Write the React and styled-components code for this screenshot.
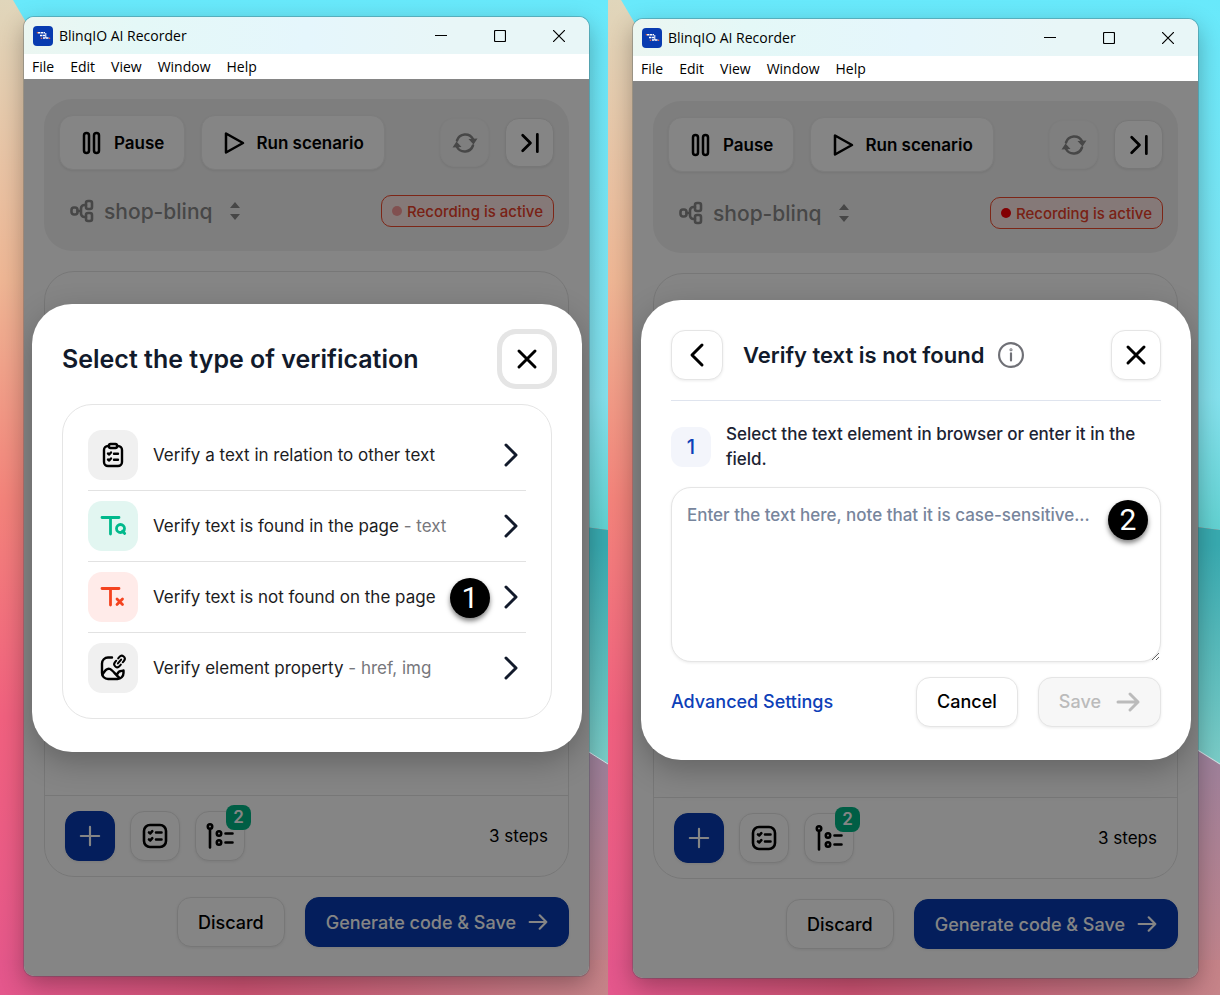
import React, { useState } from 'react';
import styled, { createGlobalStyle, css } from 'styled-components';

const verifications = [
    { id: 'relation', icon: 'clipboard', tone: 'plain', label: 'Verify a text in relation to other text' },
    { id: 'found', icon: 'textFound', tone: 'green', label: 'Verify text is found in the page', hint: 'text' },
    { id: 'notFound', icon: 'textMissing', tone: 'red', label: 'Verify text is not found on the page', marker: 1 },
    { id: 'property', icon: 'imageLink', tone: 'plain', label: 'Verify element property', hint: 'href, img' },
];

const icons = {
    pause: <><rect x="4" y="2" width="5" height="20" rx="2.5"/><rect x="14" y="2" width="5" height="20" rx="2.5"/></>,
    play: <path d="M4 2.5v19L21 12z"/>,
    skip: <path d="M4 3.5l8.5 8.5L4 20.500M20 2.500v19"/>,
    sync: (
        <>
            <path d="M4 9.500a8.800 8.800 0 0 1 16-1.500M20 14.500a8.800 8.800 0 0 1-16 1.500"/>
            <path d="M15.500 8l9-.5-4 6zM8.500 16l-9 .5 4-6z" fill="currentColor" stroke="none"/>
        </>
    ),
    project: (
        <>
            <rect x="1.500" y="8.500" width="6" height="7" rx="2.500"/>
            <rect x="16" y="2" width="6" height="8" rx="2"/>
            <rect x="16" y="14" width="6" height="8" rx="2"/>
            <path d="M11 12V9.500A3.500 3.500 0 0 1 14.500 6H16M11 12v2.500a3.500 3.500 0 0 0 3.500 3.500H16M7.500 12H11"/>
        </>
    ),
    plus: <path d="M12 1v22M1 12h22"/>,
    close: <path d="M4 4l16 16M20 4L4 20"/>,
    right: <path d="M7 2l10 10L7 22"/>,
    left: <path d="M17 2L7 12l10 10"/>,
    arrow: <path d="M2 12h20M14 4l8 8-8 8"/>,
    info: <><circle cx="12" cy="12" r="11"/><path d="M12 10.500v6.500"/><circle cx="12" cy="7.200" r=".4"/></>,
    checklist: (
        <>
            <rect x="1" y="1" width="22" height="22" rx="6"/>
            <path d="M6 8.500l1.300 1 2-2.300M6 15.500l1.300 1 2-2.300M13 8.500h5.500M13 15.500h5.500"/>
        </>
    ),
    branch: (
        <>
            <circle cx="2" cy="2.500" r="2.200"/>
            <path d="M2 5v18.500M17.500 9.500h7M17.500 18.500h7"/>
            <circle cx="11" cy="9.500" r="2.200"/>
            <circle cx="11" cy="18.500" r="2.200"/>
        </>
    ),
    clipboard: (
        <>
            <path d="M8 3H7a4 4 0 0 0-4 4v12a4 4 0 0 0 4 4h10a4 4 0 0 0 4-4V7a4 4 0 0 0-4-4h-1"/>
            <rect x="8" y="1" width="8" height="4" rx="1.500"/>
            <path d="M7 10.500l1.200 1 1.800-2M7 16.500l1.200 1 1.800-2M13 10.800h4M13 16.800h4"/>
        </>
    ),
    textFound: (
        <>
            <path d="M1 3.500h17M9.500 3.500V20"/>
            <circle cx="19.500" cy="14.500" r="4"/>
            <path d="M21.500 17l2.200 2.500"/>
        </>
    ),
    textMissing: <path d="M1 3.500h17M9.500 3.500V20M16 14l5.500 5.500M21.500 14L16 19.500"/>,
    imageLink: (
        <>
            <path d="M11 1.500H7a6 6 0 0 0-6 6V17a6 6 0 0 0 6 6h9.500a6 6 0 0 0 6-6v-2.500"/>
            <path d="M1.500 18.500c2-3.500 5-6.500 7.500-5.500s5 5 9 8.500M16 18.500c1-2.500 3.500-4 6-3.500"/>
            <g transform="translate(18.500 5.500) rotate(-50)" strokeWidth="2">
                <path d="M-1.500 3h-2a3 3 0 0 1 0-6h2M1.500-3h2a3 3 0 0 1 0 6h-2M-2.500 0h5"/>
            </g>
        </>
    ),
};

const Icon = ({ name, size = 24, weight = 2 }) => (
    <svg width={size} height={size} viewBox="0 0 24 24" fill="none" stroke="currentColor" strokeWidth={weight}
        strokeLinecap="round" strokeLinejoin="round" overflow="visible" aria-hidden="true">
        {icons[name]}
    </svg>
);

const Logo = () => (
    <svg width="20" height="20" viewBox="0 0 20 20" aria-hidden="true">
        <rect width="20" height="20" rx="4" fill="#083bb0"/>
        <path d="M5 6.800h7M7 9.500h5.500M10 12h6" stroke="#fff" strokeWidth="1.500" strokeDasharray="2.400 .5"/>
        <path d="M12.800 7v5" stroke="#fff" strokeWidth="1"/>
        <circle cx="4.500" cy="6.800" r=".8" fill="#f26a3d"/>
        <circle cx="8.500" cy="12.200" r=".8" fill="#f26a3d"/>
        <circle cx="16.500" cy="12.200" r=".8" fill="#f26a3d"/>
    </svg>
);

const Wallpaper = ({ id }) => (
    <Backdrop viewBox="0 0 608 995" preserveAspectRatio="none" aria-hidden="true">
        <defs>
            <linearGradient id={`${id}-sky`} x1="0" y1="0" x2="0" y2="1">
                <stop offset="0" stopColor="#68e9fb"/>
                <stop offset=".75" stopColor="#85e2ee"/>
                <stop offset="1" stopColor="#62d2d2"/>
            </linearGradient>
            <linearGradient id={`${id}-teal`} x1="0" y1="0" x2="0" y2="1">
                <stop offset="0" stopColor="#38aab0"/>
                <stop offset=".2" stopColor="#38aab0"/>
                <stop offset="1" stopColor="#7bcdc8"/>
            </linearGradient>
            <linearGradient id={`${id}-coral`} x1="0" y1="0" x2="0" y2="1">
                <stop offset="0" stopColor="#e0d6bb"/>
                <stop offset=".28" stopColor="#efb795"/>
                <stop offset=".5" stopColor="#f4847b"/>
                <stop offset=".72" stopColor="#f1617f"/>
                <stop offset="1" stopColor="#e4578c"/>
            </linearGradient>
            <linearGradient id={`${id}-dusk`} x1="0" y1="0" x2="0" y2="1">
                <stop offset=".3" stopColor="#94809f"/>
                <stop offset="1" stopColor="#c68489"/>
            </linearGradient>
            <linearGradient id={`${id}-floor`} x1="0" y1="0" x2="1" y2="0">
                <stop offset="0" stopColor="#e4578c"/>
                <stop offset=".4" stopColor="#cf5474"/>
                <stop offset="1" stopColor="#c68489"/>
            </linearGradient>
        </defs>
        <rect width="608" height="995" fill={`url(#${id}-coral)`}/>
        <path d="M13 0h595v530L300 490z" fill={`url(#${id}-sky)`}/>
        <path d="M300 490l308 40v234L300 570z" fill={`url(#${id}-teal)`}/>
        <path d="M300 570l308 194v231H300z" fill={`url(#${id}-dusk)`}/>
        <path d="M300 570l308 194" stroke="#cfeaec" strokeWidth="1"/>
        <rect y="960" width="608" height="35" fill={`url(#${id}-floor)`}/>
    </Backdrop>
);

const AppWindow = ({ id, blinking, children }) => (
    <Window>
        <TitleBar>
            <Logo/>
            <h1>BlinqIO AI Recorder</h1>
            <Caption aria-label="Minimize"><svg width="12" height="12"><path d="M0 5.500h12"/></svg></Caption>
            <Caption aria-label="Maximize"><svg width="12" height="12"><rect x=".5" y=".5" width="11" height="11" rx="1"/></svg></Caption>
            <Caption aria-label="Close"><svg width="12" height="12"><path d="M0 0l12 12M12 0L0 12"/></svg></Caption>
        </TitleBar>
        <MenuBar>
            {['File', 'Edit', 'View', 'Window', 'Help'].map(name => <button key={name}>{name}</button>)}
        </MenuBar>
        <Body>
            <Controls>
                <ControlRow>
                    <ControlButton><Icon name="pause" weight={2.5}/>Pause</ControlButton>
                    <ControlButton><Icon name="play" weight={2.5}/>Run scenario</ControlButton>
                    <Spacer/>
                    <SquareButton $small $faded disabled aria-label="Refresh"><Icon name="sync" weight={2.5}/></SquareButton>
                    <SquareButton $small aria-label="Skip to end"><Icon name="skip" size={22} weight={3}/></SquareButton>
                </ControlRow>
                <ControlRow>
                    <Project htmlFor={`${id}-project`}>
                        <Icon name="project" weight={2.6}/>
                        <select id={`${id}-project`} aria-label="Project"><option>shop-blinq</option></select>
                        <svg width="12" height="20" viewBox="0 0 12 20" fill="currentColor" aria-hidden="true">
                            <path d="M1 7l5-6 5 6zM1 13l5 6 5-6z"/>
                        </svg>
                    </Project>
                    <Spacer/>
                    <Status><Dot $on={!blinking}/>Recording is active</Status>
                </ControlRow>
            </Controls>
            <StepsCard>
                <StepsFooter>
                    <SquareButton $primary aria-label="Add step"><Icon name="plus" size={20} weight={2.6}/></SquareButton>
                    <SquareButton aria-label="Checklist"><Icon name="checklist" weight={2.6}/></SquareButton>
                    <SquareButton aria-label="Steps tree"><Icon name="branch" weight={2.6}/><Count>2</Count></SquareButton>
                    <Spacer/>
                    <span>3 steps</span>
                </StepsFooter>
            </StepsCard>
            <Actions>
                <Button>Discard</Button>
                <Button $primary>Generate code &amp; Save<Icon name="arrow" size={20} weight={2.6}/></Button>
            </Actions>
            <Overlay>{children}</Overlay>
        </Body>
    </Window>
);

const VerificationPicker = () => (
    <Dialog role="dialog" aria-labelledby="picker-title">
        <DialogHeader>
            <h2 id="picker-title">Select the type of verification</h2>
            <SquareButton $focused aria-label="Close"><Icon name="close" size={24} weight={3}/></SquareButton>
        </DialogHeader>
        <OptionList>
            {verifications.map(item => (
                <li key={item.id}>
                    <Option>
                        <Tile $tone={item.tone}><Icon name={item.icon} weight={item.tone === 'plain' ? 2.4 : 2.8}/></Tile>
                        <OptionText>{item.label}{item.hint && <small> - {item.hint}</small>}</OptionText>
                        <Icon name="right" weight={3}/>
                    </Option>
                    {item.marker && <Marker $right={36} $top={16}>{item.marker}</Marker>}
                </li>
            ))}
        </OptionList>
    </Dialog>
);

const TextForm = () => {
    const [text, setText] = useState('');

    return (
        <Dialog role="dialog" aria-labelledby="form-title">
            <DialogHeader $divided>
                <SquareButton $wide aria-label="Back"><Icon name="left" weight={3}/></SquareButton>
                <h2 id="form-title">Verify text is not found</h2>
                <InfoButton aria-label="More information"><Icon name="info" size={26}/></InfoButton>
                <SquareButton aria-label="Close"><Icon name="close" size={24} weight={3}/></SquareButton>
            </DialogHeader>
            <StepLabel htmlFor="verify-text">
                <span>1</span>
                <p>Select the text element in browser or enter it in the field.</p>
            </StepLabel>
            <Field>
                <textarea id="verify-text" value={text} onChange={e => setText(e.target.value)}
                    placeholder="Enter the text here, note that it is case-sensitive..."/>
                <Marker $right={13} $top={13}>2</Marker>
            </Field>
            <DialogFooter>
                <a href="#advanced">Advanced Settings</a>
                <Button>Cancel</Button>
                <Button disabled={!text}>Save<Icon name="arrow" weight={3}/></Button>
            </DialogFooter>
        </Dialog>
    );
};

const App = () => (
    <>
        <GlobalStyle/>
        <Page>
            <Pane>
                <Wallpaper id="left"/>
                <AppWindow id="left" blinking><VerificationPicker/></AppWindow>
            </Pane>
            <Pane $lower>
                <Wallpaper id="right"/>
                <AppWindow id="right"><TextForm/></AppWindow>
            </Pane>
        </Page>
    </>
);

export default App;

const GlobalStyle = createGlobalStyle`
    *, *::before, *::after {
        box-sizing:border-box;
    }

    body {
        margin:0;
        font-family:Inter, 'Open Sans', sans-serif;
        font-size:17px;
        color:#000;
    }

    h1, h2, p, ul {
        margin:0;
        padding:0;
    }

    button, select, textarea {
        font:inherit;
        color:inherit;
    }

    button {
        margin:0;
        padding:0;
        border:0;
        background:none;
        cursor:pointer;
    }

    svg {
        display:block;
        flex:none;
    }
`

const Page = styled.main`
    display:grid;
    grid-template-columns:608fr 612fr;
    min-height:100vh;
`

const Pane = styled.section`
    position:relative;
    isolation:isolate;
    display:flex;
    min-width:0;
    padding:${({ $lower }) => $lower ? '19px 22px 17px 25px' : '17px 19px 19px 24px'};
    overflow:hidden;
`

const Backdrop = styled.svg`
    position:absolute;
    inset:0;
    z-index:-1;
    width:100%;
    height:100%;
`

const Window = styled.article`
    flex:1;
    display:flex;
    flex-direction:column;
    min-width:0;
    border-radius:10px;
    background:white;
    box-shadow:0 0 0 1px rgba(60, 80, 90, 0.3), 0 8px 24px rgba(0, 0, 0, 0.3);
    overflow:hidden;
`

const TitleBar = styled.header`
    display:flex;
    align-items:center;
    height:37px;
    padding:0 1px 0 9px;
    background:linear-gradient(90deg, #ebf6f1, #e4f8f7 20%, #e5f6fc 50%, #e8f6f7 75%);

    & > h1 {
        flex:1;
        margin-left:6px;
        font:400 14px 'Open Sans', sans-serif;
    }
`

const Caption = styled.button`
    display:grid;
    place-items:center;
    width:59px;
    height:37px;

    & > svg {
        fill:none;
        stroke:black;
        stroke-width:1.2;
    }
`

const MenuBar = styled.nav`
    display:flex;
    align-items:center;
    gap:16px;
    height:25px;
    padding-left:8px;
    font:400 14px 'Open Sans', sans-serif;
`

const Body = styled.div`
    position:relative;
    flex:1;
    display:flex;
    flex-direction:column;
    gap:20px;
    padding:20px 20px 29px;
`

const Overlay = styled.div`
    position:absolute;
    inset:0;
    display:flex;
    align-items:center;
    padding:0 7px 0 8px;
    background:rgba(0, 0, 0, 0.48);
`

const Controls = styled.section`
    display:flex;
    flex-direction:column;
    gap:25px;
    padding:16px 15px 24px;
    border-radius:28px;
    background:#f2f2f2;
`

const ControlRow = styled.div`
    display:flex;
    align-items:center;
    gap:16px;
`

const Spacer = styled.div`
    flex:1;
`

const raised = css`
    border:1px solid #e5e5e5;
    background:white;
    box-shadow:0 1px 3px rgba(0, 0, 0, 0.08);
`

const ControlButton = styled.button`
    ${raised}
    display:flex;
    align-items:center;
    gap:10px;
    height:55px;
    padding:0 20px;
    border-color:#eee;
    border-radius:14px;
    font-weight:600;
`

const SquareButton = styled.button`
    ${raised}
    position:relative;
    flex:none;
    display:grid;
    place-items:center;
    width:${({ $small, $wide }) => $small ? 49 : $wide ? 52 : 50}px;
    height:${({ $small }) => $small ? 49 : 50}px;
    border-radius:14px;

    ${({ $primary }) => $primary && css`
        border-color:#083bb0;
        background:#083bb0;
        color:white;
    `}

    ${({ $faded }) => $faded && css`
        border-color:#f0f0f0;
        background:#f4f4f4;
        color:#888;
    `}

    ${({ $focused }) => $focused && css`
        border-color:white;
        box-shadow:0 0 0 5px #e5e5e5;
    `}
`

const Project = styled.label`
    display:flex;
    align-items:center;
    gap:10px;
    height:32px;
    padding-left:11px;
    color:#898989;

    & > select {
        padding:0;
        margin-right:6px;
        border:0;
        background:none;
        appearance:none;
        font-size:21px;
        font-weight:500;
    }
`

const Status = styled.div`
    display:flex;
    align-items:center;
    gap:5px;
    height:32px;
    padding:0 10px;
    border:1px solid #f0492c;
    border-radius:10px;
    background:#ffe9e6;
    color:#e8402a;
    font-size:15px;
    font-weight:500;
`

const Dot = styled.i`
    width:10px;
    height:10px;
    border-radius:50%;
    background:${({ $on }) => $on ? '#fb0007' : '#f79a9a'};
`

const StepsCard = styled.section`
    flex:1;
    display:flex;
    flex-direction:column;
    justify-content:flex-end;
    border:1px solid #e5e5e5;
    border-radius:30px;
`

const StepsFooter = styled.footer`
    display:flex;
    align-items:center;
    gap:15px;
    padding:15px 20px;
    border-top:1px solid #e5e5e5;
`

const Count = styled.b`
    position:absolute;
    top:-7px;
    right:-7px;
    width:25px;
    height:25px;
    border-radius:8px;
    background:#00b584;
    color:white;
    font-size:17px;
    font-weight:600;
    line-height:25px;
`

const Actions = styled.div`
    display:flex;
    justify-content:flex-end;
    gap:20px;
`

const Button = styled.button`
    ${raised}
    display:flex;
    align-items:center;
    gap:15px;
    height:50px;
    padding:0 20px;
    border-radius:14px;
    font-size:18px;
    font-weight:500;

    ${({ $primary }) => $primary && css`
        gap:12px;
        border-color:#083bb0;
        background:#083bb0;
        color:white;
    `}

    &:disabled {
        background:#f7f7f7;
        color:#bbb;
        cursor:default;
    }
`

const Dialog = styled.section`
    flex:1;
    min-width:0;
    padding:30px 30px 33px;
    border-radius:40px;
    background:white;
    box-shadow:0 10px 30px rgba(0, 0, 0, 0.25);
`

const DialogHeader = styled.header`
    display:flex;
    align-items:center;
    margin-bottom:20px;

    & > h2 {
        flex:1;
        color:#121a2b;
        font-size:25px;
        font-weight:600;
    }

    ${({ $divided }) => $divided && css`
        margin-bottom:21px;
        padding-bottom:20px;
        border-bottom:1px solid #dfe4ee;

        & > h2 {
            flex:none;
            margin:0 14px 0 20px;
            font-size:22px;
        }
    `}
`

const InfoButton = styled.button`
    margin-right:auto;
    color:#6f7076;
`

const OptionList = styled.ul`
    padding:15px 25px;
    border:1px solid #e5e5e5;
    border-radius:30px;
    list-style:none;

    & > li {
        position:relative;
    }

    & > li + li {
        border-top:1px solid #e2e2e2;
    }
`

const Option = styled.button`
    display:flex;
    align-items:center;
    gap:15px;
    width:100%;
    padding:10px 3px 10px 0;
    color:#121a2b;
    text-align:left;
`

const OptionText = styled.span`
    flex:1;
    color:#1c1c1e;

    & > small {
        color:#77777c;
        font-size:inherit;
    }
`

const tones = {
    plain: ['#f0f0f0', '#000'],
    green: ['#e2f6f1', '#00b98c'],
    red: ['#ffebe9', '#f4431f'],
};

const Tile = styled.span`
    display:grid;
    place-items:center;
    width:50px;
    height:50px;
    border-radius:14px;
    background:${({ $tone }) => tones[$tone][0]};
    color:${({ $tone }) => tones[$tone][1]};
`

const Marker = styled.b`
    position:absolute;
    top:${({ $top }) => $top}px;
    right:${({ $right }) => $right}px;
    width:40px;
    height:40px;
    border-radius:50%;
    background:black;
    box-shadow:0 3px 5px rgba(0, 0, 0, 0.5);
    color:white;
    font:400 30px/40px Roboto, sans-serif;
    text-align:center;
    pointer-events:none;
`

const StepLabel = styled.label`
    display:flex;
    align-items:center;
    gap:15px;
    color:#1c2333;
    font-weight:500;
    line-height:25px;

    & > span {
        flex:none;
        width:40px;
        border-radius:12px;
        background:#f3f5fb;
        color:#0d40b8;
        font-size:20px;
        line-height:40px;
        text-align:center;
    }
`

const Field = styled.div`
    position:relative;
    margin:15px 0;

    & > textarea {
        ${raised}
        display:block;
        width:100%;
        height:175px;
        padding:15px;
        border-radius:20px;
        outline:none;
        font-weight:500;
        line-height:25px;
    }

    & > textarea::placeholder {
        color:#77859c;
    }
`

const DialogFooter = styled.footer`
    display:flex;
    align-items:center;
    gap:20px;

    & > a {
        margin-right:auto;
        color:#0d40b8;
        font-size:18px;
        font-weight:500;
        text-decoration:none;
    }
`
